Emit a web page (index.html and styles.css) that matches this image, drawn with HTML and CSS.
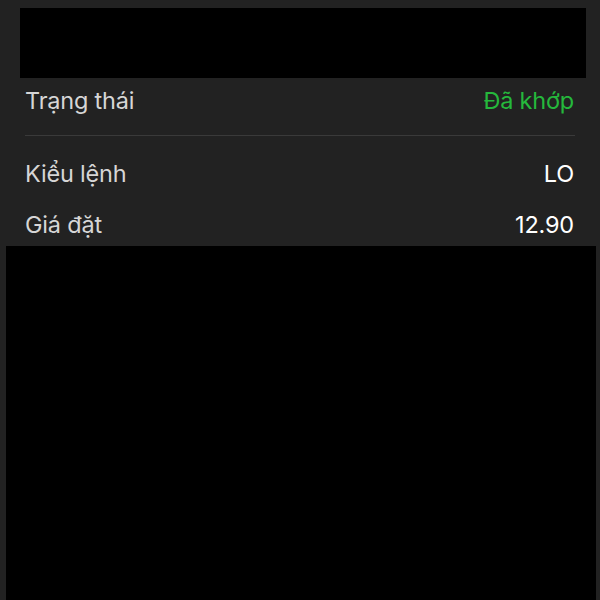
FILE: index.html
```html
<!DOCTYPE html>
<html lang="vi">
<head>
  <meta charset="UTF-8">
  <meta name="viewport" content="width=device-width, initial-scale=1.0">
  <title>Chi tiết lệnh</title>
  <link rel="stylesheet" href="styles.css">
</head>
<body>

<div class="chi-tiet">
  <div class="che-tren"></div>
  <div class="dong">
    <span class="nhan">Trạng thái</span>
    <span class="gia-tri xanh">Đã khớp</span>
  </div>
  <div class="ke"></div>
  <div class="dong dong-nho">
    <span class="nhan">Kiểu lệnh</span>
    <span class="gia-tri">LO</span>
  </div>
  <div class="dong dong-cuoi">
    <span class="nhan">Giá đặt</span>
    <span class="gia-tri">12.90</span>
  </div>
</div>
<div class="che-duoi"></div>

</body>
</html>
```

FILE: styles.css
```css
* { box-sizing: border-box; margin: 0; padding: 0; }
html, body { height: 100%; }
body {
  background: #222222;
  font-family: Inter, "Open Sans", sans-serif;
  display: flex;
  flex-direction: column;
  overflow: hidden;
}
.chi-tiet {
  padding: 8px 14px 0 20px;
}
.che-tren {
  height: 70px;
  background: #000;
}
.dong {
  display: flex;
  justify-content: space-between;
  align-items: center;
  height: 45px;
  padding: 0 12px 0 5px;
  font-size: 23.5px;
  letter-spacing: -0.2px;
}
.nhan { color: #d6d6d6; }
.gia-tri { color: #ffffff; }
.xanh { color: #25b83c; }
.ke {
  height: 1px;
  background: #3a3a3a;
  margin: 12px 11px 12px 5px;
}
.dong-nho { height: 50px; }
.dong-cuoi { height: 48px; padding-top: 5px; }
.che-duoi {
  flex: 1;
  background: #000;
  margin: 0 4px 0 6px;
}
```
